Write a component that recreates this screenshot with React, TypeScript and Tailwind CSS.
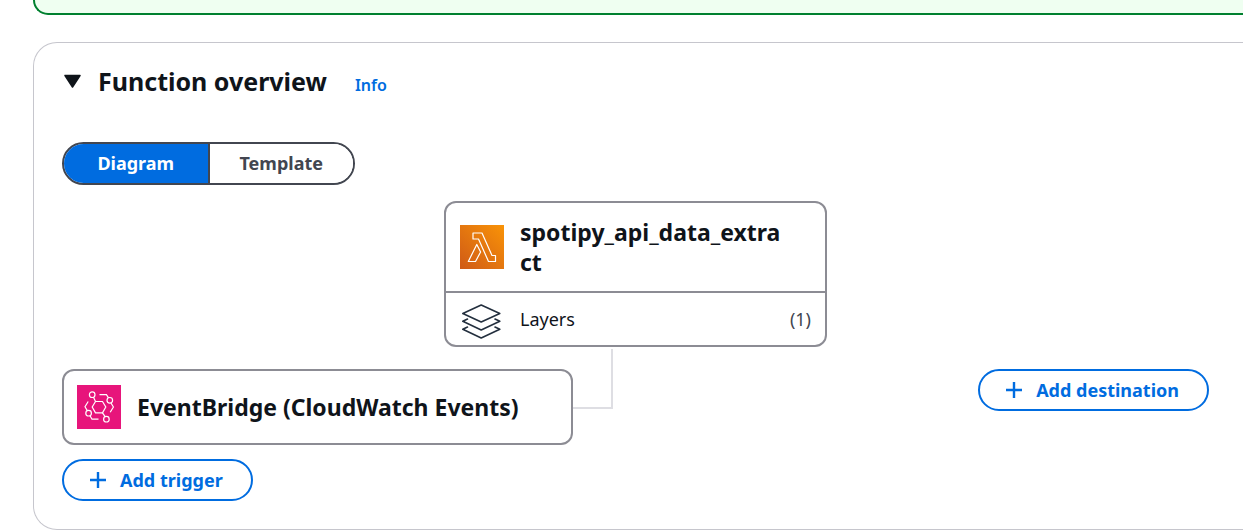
import type { ReactNode } from 'react';

function LambdaIcon() {
  return (
    <svg viewBox="0 0 44 44" className="size-11 shrink-0" aria-hidden="true">
      <defs>
        <linearGradient id="lambda-bg" x1="0" y1="1" x2="1" y2="0">
          <stop offset="0" stopColor="#cf5a17" />
          <stop offset="1" stopColor="#f99307" />
        </linearGradient>
      </defs>
      <rect width="44" height="44" fill="url(#lambda-bg)" />
      <g fill="none" stroke="#fff" strokeWidth="1.2" strokeLinejoin="round">
        <path d="M13 8H22L32 30.5H35.5V36.5H28.5L18.5 14H13Z" />
        <path d="M16.8 19.5L20.6 27L15.5 36.5H8.3Z" />
      </g>
    </svg>
  );
}

function EventBridgeIcon() {
  return (
    <svg viewBox="0 0 44 44" className="size-11 shrink-0" aria-hidden="true">
      <rect width="44" height="44" fill="#e7157b" />
      <g fill="none" stroke="#fff" strokeWidth="1.2">
        <path d="M18.5 16.5H25.5L28.8 22L25.5 27.8H18.5L15.2 22Z" />
        <circle cx="15.2" cy="9.7" r="2.8" />
        <circle cx="32.8" cy="15.3" r="2.8" />
        <circle cx="11.6" cy="28.2" r="2.8" />
        <circle cx="29.4" cy="34.2" r="2.8" />
        <path d="M16.5 12.3L18.5 16.5M25.5 27.8L28.1 31.6" />
        <path d="M22.5 9.7H29.4L31.5 12.8M34 18L36.4 22L33.2 27.3" />
        <path d="M11.2 16.5L8 21.8L10.3 25.6M13 30.8L15 34.2H21.5" />
      </g>
    </svg>
  );
}

function LayersIcon() {
  return (
    <svg viewBox="0 0 44 40" className="h-10 w-11 shrink-0" aria-hidden="true">
      <g fill="none" stroke="#232f3e" strokeWidth="1.6" strokeLinejoin="round" strokeLinecap="round">
        <path d="M21.2 6L39.8 14.5L21.2 23L2.8 14.5Z" />
        <path d="M7.5 20L2.8 22.3L21.2 31L39.8 22.3L35 20" />
        <path d="M7.5 28L2.8 30.3L21.2 39L39.8 30.3L35 28" />
      </g>
    </svg>
  );
}

function AddButton({ children }: { children: ReactNode }) {
  return (
    <button
      type="button"
      className="flex items-center gap-3 rounded-full border-2 border-[#006ce0] bg-white px-7 py-[7px] pl-6 text-lg leading-6 font-bold text-[#006ce0]"
    >
      <svg viewBox="0 0 20 20" className="size-5" aria-hidden="true">
        <path d="M10 2V18M2 10H18" stroke="currentColor" strokeWidth="2.4" />
      </svg>
      {children}
    </button>
  );
}

export default function App() {
  return (
    <div className="min-h-screen overflow-hidden bg-white pl-[33px] font-['Noto_Sans',sans-serif] text-[#0f141a]">
      <div role="status" className="h-[15px] rounded-bl-2xl border-b-2 border-l-2 border-[#00802f] bg-[#effff1]" />

      <section className="mt-[27px] rounded-l-3xl border border-r-0 border-[#c6c6cd] pt-5 pr-[34px] pb-7 pl-7">
        <header className="flex items-baseline">
          <h2>
            <button type="button" aria-expanded="true" className="flex items-center gap-4 text-[25px] leading-9 font-bold">
              <svg viewBox="0 0 20 20" className="size-5" aria-hidden="true">
                <path d="M3 4.5H18L10.5 16Z" fill="currentColor" stroke="currentColor" strokeWidth="1.5" strokeLinejoin="round" />
              </svg>
              Function overview
            </button>
          </h2>
          <a href="#info" className="ml-7 text-base leading-6 font-semibold text-[#006ce0]">
            Info
          </a>
        </header>

        <div role="group" aria-label="View" className="mt-[43px] flex h-[43px] w-[293px] overflow-hidden rounded-full border-2 border-[#424650] text-lg leading-6 font-bold">
          <button type="button" aria-pressed="true" className="flex-1 border-r-2 border-[#424650] bg-[#006ce0] pb-0.5 text-white">
            Diagram
          </button>
          <button type="button" aria-pressed="false" className="flex-1 bg-white pb-0.5 text-[#424650]">
            Template
          </button>
        </div>

        <div className="mx-auto mt-4 w-[383px] rounded-xl border-2 border-[#8c8c94]">
          <div className="flex items-center gap-4 border-b-2 border-[#8c8c94] py-3.5 pr-9 pl-3.5">
            <LambdaIcon />
            <h3 className="min-w-0 text-[23px] leading-[30px] font-bold break-all">spotipy_api_data_extract</h3>
          </div>
          <div className="flex items-center gap-4 px-3.5 py-1.5 text-lg leading-6">
            <LayersIcon />
            <span>Layers</span>
            <span className="ml-auto text-[#424650]">(1)</span>
          </div>
        </div>

        <div className="mt-[22px] flex items-start justify-between">
          <div className="flex flex-col items-start gap-3.5">
            <div className="relative flex w-[511px] items-center gap-4 rounded-xl border-2 border-[#8c8c94] px-[13px] py-3.5">
              <EventBridgeIcon />
              <h3 className="text-[23px] leading-[30px] font-bold whitespace-nowrap">EventBridge (CloudWatch Events)</h3>
              <div className="absolute -top-[22px] left-full ml-0.5 h-[60px] w-10 border-r-2 border-b-2 border-[#dedee3]" />
            </div>
            <AddButton>Add trigger</AddButton>
          </div>
          <AddButton>Add destination</AddButton>
        </div>
      </section>
    </div>
  );
}
